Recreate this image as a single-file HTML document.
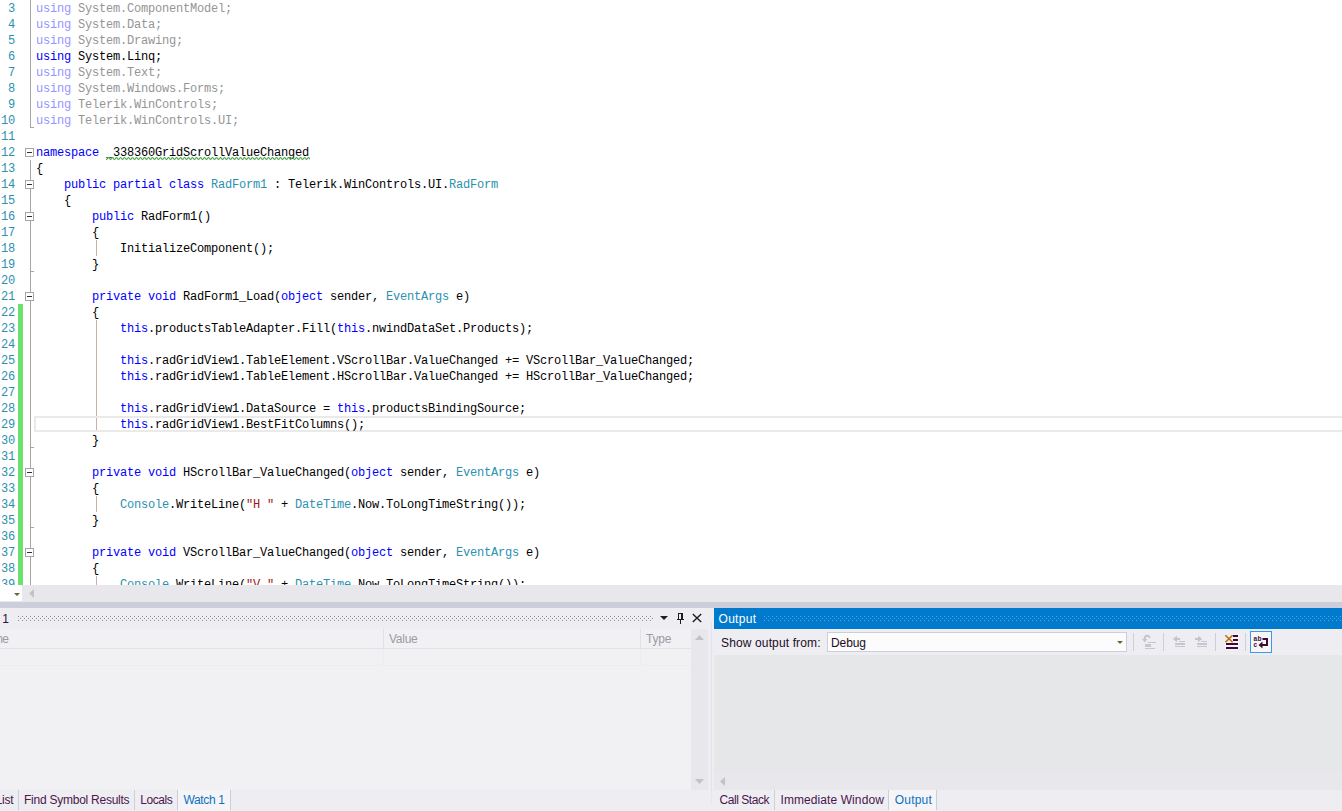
<!DOCTYPE html>
<html lang="en"><head><meta charset="utf-8"><title>RadForm1.cs - Visual Studio</title>
<style>
html,body{margin:0;padding:0}
body{width:1342px;height:811px;overflow:hidden;position:relative;background:#fff;font-family:"Liberation Sans", sans-serif;font-size:12px;color:#1e1e1e}
.abs{position:absolute}
#ed{position:absolute;left:0;top:0;width:1342px;height:585px;overflow:hidden;background:#fff}
.ln,.cl{position:absolute;height:16px;line-height:16px;font-family:"Liberation Mono", monospace;font-size:12.0px;letter-spacing:-0.2012px;white-space:pre}
.ln{left:0;width:15px;text-align:right;color:#2b91af;letter-spacing:-0.2012px}
.cl{left:36px;color:#000}
.k{color:#0000ff}.t{color:#2b91af}.s{color:#a31515}.g{color:#959595}.gk{color:#9494ff}
.ob{position:absolute;left:25px;width:7px;height:7px;border:1px solid #a5a5a5;background:#fff}
.ob i{position:absolute;left:1px;top:3px;width:5px;height:1px;background:#4d1a4d}
.ol{position:absolute;left:30px;width:1px;background:#a5a5a5}
.ot{position:absolute;left:30px;width:4px;height:1px;background:#a5a5a5}
.ig{position:absolute;left:96px;width:1px;background:#cbb0a8}
</style></head><body>
<div id="ed">
<div class="abs" style="left:18px;top:304px;width:5px;height:281px;background:#6ce26c"></div>
<div class="ol" style="top:0;height:128px"></div><div class="ot" style="top:127px"></div>
<div class="ol" style="top:160px;height:425px"></div>
<div class="ot" style="top:271px"></div><div class="ot" style="top:447px"></div><div class="ot" style="top:527px"></div>
<div class="ob" style="top:148px"><i></i></div><div class="ob" style="top:180px"><i></i></div><div class="ob" style="top:212px"><i></i></div><div class="ob" style="top:292px"><i></i></div><div class="ob" style="top:468px"><i></i></div><div class="ob" style="top:548px"><i></i></div>
<div class="ig" style="top:240px;height:16px"></div><div class="ig" style="top:320px;height:112px"></div><div class="ig" style="top:496px;height:16px"></div><div class="ig" style="top:576px;height:16px"></div>
<div class="abs" style="left:34px;top:416px;width:1320px;height:12px;border:2px solid #eaeaea"></div>
<div class="ln" style="top:1px">3</div><div class="cl" style="top:1px"><span class="gk">using</span><span class="g"> System.ComponentModel;</span></div>
<div class="ln" style="top:17px">4</div><div class="cl" style="top:17px"><span class="gk">using</span><span class="g"> System.Data;</span></div>
<div class="ln" style="top:33px">5</div><div class="cl" style="top:33px"><span class="gk">using</span><span class="g"> System.Drawing;</span></div>
<div class="ln" style="top:49px">6</div><div class="cl" style="top:49px"><span class="k">using</span> System.Linq;</div>
<div class="ln" style="top:65px">7</div><div class="cl" style="top:65px"><span class="gk">using</span><span class="g"> System.Text;</span></div>
<div class="ln" style="top:81px">8</div><div class="cl" style="top:81px"><span class="gk">using</span><span class="g"> System.Windows.Forms;</span></div>
<div class="ln" style="top:97px">9</div><div class="cl" style="top:97px"><span class="gk">using</span><span class="g"> Telerik.WinControls;</span></div>
<div class="ln" style="top:113px">10</div><div class="cl" style="top:113px"><span class="gk">using</span><span class="g"> Telerik.WinControls.UI;</span></div>
<div class="ln" style="top:129px">11</div>
<div class="ln" style="top:145px">12</div><div class="cl" style="top:145px"><span class="k">namespace</span> <span class="sq">_338360GridScrollValueChanged</span></div>
<div class="ln" style="top:161px">13</div><div class="cl" style="top:161px">{</div>
<div class="ln" style="top:177px">14</div><div class="cl" style="top:177px">    <span class="k">public partial class</span> <span class="t">RadForm1</span> : Telerik.WinControls.UI.<span class="t">RadForm</span></div>
<div class="ln" style="top:193px">15</div><div class="cl" style="top:193px">    {</div>
<div class="ln" style="top:209px">16</div><div class="cl" style="top:209px">        <span class="k">public</span> RadForm1()</div>
<div class="ln" style="top:225px">17</div><div class="cl" style="top:225px">        {</div>
<div class="ln" style="top:241px">18</div><div class="cl" style="top:241px">            InitializeComponent();</div>
<div class="ln" style="top:257px">19</div><div class="cl" style="top:257px">        }</div>
<div class="ln" style="top:273px">20</div>
<div class="ln" style="top:289px">21</div><div class="cl" style="top:289px">        <span class="k">private void</span> RadForm1_Load(<span class="k">object</span> sender, <span class="t">EventArgs</span> e)</div>
<div class="ln" style="top:305px">22</div><div class="cl" style="top:305px">        {</div>
<div class="ln" style="top:321px">23</div><div class="cl" style="top:321px">            <span class="k">this</span>.productsTableAdapter.Fill(<span class="k">this</span>.nwindDataSet.Products);</div>
<div class="ln" style="top:337px">24</div>
<div class="ln" style="top:353px">25</div><div class="cl" style="top:353px">            <span class="k">this</span>.radGridView1.TableElement.VScrollBar.ValueChanged += VScrollBar_ValueChanged;</div>
<div class="ln" style="top:369px">26</div><div class="cl" style="top:369px">            <span class="k">this</span>.radGridView1.TableElement.HScrollBar.ValueChanged += HScrollBar_ValueChanged;</div>
<div class="ln" style="top:385px">27</div>
<div class="ln" style="top:401px">28</div><div class="cl" style="top:401px">            <span class="k">this</span>.radGridView1.DataSource = <span class="k">this</span>.productsBindingSource;</div>
<div class="ln" style="top:417px">29</div><div class="cl" style="top:417px">            <span class="k">this</span>.radGridView1.BestFitColumns();</div>
<div class="ln" style="top:433px">30</div><div class="cl" style="top:433px">        }</div>
<div class="ln" style="top:449px">31</div>
<div class="ln" style="top:465px">32</div><div class="cl" style="top:465px">        <span class="k">private void</span> HScrollBar_ValueChanged(<span class="k">object</span> sender, <span class="t">EventArgs</span> e)</div>
<div class="ln" style="top:481px">33</div><div class="cl" style="top:481px">        {</div>
<div class="ln" style="top:497px">34</div><div class="cl" style="top:497px">            <span class="t">Console</span>.WriteLine(<span class="s">"H "</span> + <span class="t">DateTime</span>.Now.ToLongTimeString());</div>
<div class="ln" style="top:513px">35</div><div class="cl" style="top:513px">        }</div>
<div class="ln" style="top:529px">36</div>
<div class="ln" style="top:545px">37</div><div class="cl" style="top:545px">        <span class="k">private void</span> VScrollBar_ValueChanged(<span class="k">object</span> sender, <span class="t">EventArgs</span> e)</div>
<div class="ln" style="top:561px">38</div><div class="cl" style="top:561px">        {</div>
<div class="ln" style="top:577px">39</div><div class="cl" style="top:577px">            <span class="t">Console</span>.WriteLine(<span class="s">"V "</span> + <span class="t">DateTime</span>.Now.ToLongTimeString());</div>
<svg class="abs" style="left:106px;top:157px" width="204" height="3"><defs><pattern id="sq" width="4" height="3" patternUnits="userSpaceOnUse"><g fill="#58ab58"><rect x="2" y="0" width="1" height="1"/><rect x="1" y="1" width="1" height="1"/><rect x="3" y="1" width="1" height="1"/><rect x="0" y="2" width="1" height="1"/></g><g fill="#58ab58" opacity="0.42"><rect x="1" y="0" width="1" height="1"/><rect x="3" y="0" width="1" height="1"/><rect x="0" y="1" width="1" height="1"/><rect x="2" y="1" width="1" height="1"/><rect x="1" y="2" width="1" height="1"/><rect x="3" y="2" width="1" height="1"/></g></pattern></defs><rect width="204" height="3" fill="url(#sq)"/></svg>
</div>
<style>.tx{position:absolute;white-space:pre}</style>
<div class="abs" style="left:0px;top:585px;width:1342px;height:17px;background:#e8e8ec;"></div><div class="abs" style="left:0px;top:585px;width:22px;height:16px;background:#ffffff;"></div><svg class="abs" style="left:14px;top:593px" width="6" height="3"><path d="M0 0H6L3 3Z" fill="#6b6434"/></svg><svg class="abs" style="left:29px;top:589px" width="5" height="9"><path d="M5 0V9L0 4.5Z" fill="#c2c3c9"/></svg>
<div class="abs" style="left:0px;top:602px;width:1342px;height:6px;background:#cccedb;"></div><div class="abs" style="left:0px;top:608px;width:1342px;height:203px;background:#eeeef2;"></div>
<!-- Watch 1 tool window -->
<div class="tx" style="left:-32.5px;top:611px;line-height:16px;font-size:12px;letter-spacing:-0.345px;color:#2a1040;">Watch 1</div><svg class="abs" style="left:18px;top:616px" width="636" height="5"><defs><pattern id="gp" width="4" height="4" patternUnits="userSpaceOnUse"><rect x="0" y="0" width="1" height="1" fill="#8a8a8a"/><rect x="2" y="2" width="1" height="1" fill="#8a8a8a"/></pattern></defs><rect width="636" height="5" fill="url(#gp)"/></svg><svg class="abs" style="left:660px;top:616px" width="8" height="4"><path d="M0 0H8L4 4Z" fill="#1e1e1e"/></svg><svg class="abs" style="left:676px;top:612px" width="10" height="13" viewBox="0 0 10 13"><g fill="#1e1e1e"><rect x="2" y="1" width="1" height="6"/><rect x="2" y="1" width="5" height="1"/><rect x="5" y="1" width="2" height="6"/><rect x="1" y="7" width="7" height="1"/><rect x="4" y="8" width="1" height="4"/></g></svg><svg class="abs" style="left:692px;top:613px" width="10" height="10" viewBox="0 0 10 10"><path d="M0.8 1L9.2 9M9.2 1L0.8 9" fill="none" stroke="#1e1e1e" stroke-width="1.4"/></svg>
<div class="abs" style="left:0px;top:629px;width:691px;height:161px;background:#f1f1f4;"></div><div class="abs" style="left:0px;top:648px;width:691px;height:1px;background:#e0e1ea;"></div><div class="abs" style="left:0px;top:665px;width:691px;height:1px;background:#ededf1;"></div><div class="abs" style="left:383px;top:629px;width:1px;height:19px;background:#e0e1ea;"></div><div class="abs" style="left:383px;top:649px;width:1px;height:16px;background:#ececf0;"></div><div class="abs" style="left:640px;top:629px;width:1px;height:19px;background:#e0e1ea;"></div><div class="abs" style="left:640px;top:649px;width:1px;height:16px;background:#ececf0;"></div><div class="tx" style="left:-21px;top:631px;line-height:16px;font-size:12px;letter-spacing:-0.669px;color:#9b9ba2;">Name</div><div class="tx" style="left:389px;top:631px;line-height:16px;font-size:12px;letter-spacing:-0.275px;color:#9b9ba2;">Value</div><div class="tx" style="left:646px;top:631px;line-height:16px;font-size:12px;letter-spacing:-0.171px;color:#9b9ba2;">Type</div><div class="abs" style="left:691px;top:629px;width:17px;height:161px;background:#e8e8ec;"></div><svg class="abs" style="left:695px;top:635px" width="9" height="5"><path d="M0 5H9L4.5 0Z" fill="#c2c3c9"/></svg><svg class="abs" style="left:695px;top:779px" width="9" height="5"><path d="M0 0H9L4.5 5Z" fill="#c2c3c9"/></svg>
<div class="abs" style="left:710.5px;top:622px;width:1.5px;height:168px;background:#e1e2eb;"></div><div class="abs" style="left:710.5px;top:790px;width:1.5px;height:15px;background:#e6e6ee;"></div><div class="abs" style="left:178px;top:790px;width:52px;height:21px;background:#f5f5f8;"></div><div class="abs" style="left:18px;top:790px;width:1px;height:20px;background:#cccedb;"></div><div class="abs" style="left:134px;top:790px;width:1px;height:20px;background:#cccedb;"></div><div class="abs" style="left:177px;top:790px;width:1px;height:20px;background:#cccedb;"></div><div class="abs" style="left:230px;top:790px;width:1px;height:20px;background:#cccedb;"></div><div class="tx" style="left:-33px;top:792px;line-height:16px;font-size:12px;letter-spacing:-0.241px;color:#4a164c;">Error List</div><div class="tx" style="left:24px;top:792px;line-height:16px;font-size:12px;letter-spacing:-0.246px;color:#4a164c;">Find Symbol Results</div><div class="tx" style="left:140.2px;top:792px;line-height:16px;font-size:12px;letter-spacing:-0.417px;color:#4a164c;">Locals</div><div class="tx" style="left:183.4px;top:792px;line-height:16px;font-size:12px;letter-spacing:-0.328px;color:#0e70c0;">Watch 1</div>
<!-- Output tool window -->
<div class="abs" style="left:714px;top:608px;width:628px;height:21px;background:#007acc;"></div><div class="tx" style="left:718.5px;top:611px;line-height:16px;font-size:12px;letter-spacing:0.296px;color:#ffffff;">Output</div><svg class="abs" style="left:764px;top:616px" width="578" height="5"><defs><pattern id="gq" width="4" height="4" patternUnits="userSpaceOnUse"><rect x="0" y="0" width="1" height="1" fill="#59a8de"/><rect x="2" y="2" width="1" height="1" fill="#59a8de"/></pattern></defs><rect width="578" height="5" fill="url(#gq)"/></svg>
<div class="tx" style="left:721px;top:635px;line-height:16px;font-size:12px;letter-spacing:0.133px;color:#1c0c26;">Show output from:</div><div class="abs" style="left:827px;top:632px;width:298px;height:18px;background:#fcfcfc;border:1px solid #cccedb"></div><div class="tx" style="left:831px;top:635px;line-height:16px;font-size:12px;letter-spacing:-0.090px;color:#1c0c26;">Debug</div><svg class="abs" style="left:1117px;top:641px" width="6" height="3"><path d="M0 0H6L3 3Z" fill="#6b6434"/></svg><div class="abs" style="left:1133px;top:633px;width:1px;height:18px;background:#cccedb;"></div><div class="abs" style="left:1163px;top:633px;width:1px;height:18px;background:#cccedb;"></div><div class="abs" style="left:1215px;top:633px;width:1px;height:18px;background:#cccedb;"></div><div class="abs" style="left:1245px;top:633px;width:1px;height:18px;background:#cccedb;"></div>
<!-- toolbar icons -->
<svg class="abs" style="left:1140px;top:632px" width="20" height="20" viewBox="0 0 20 20"><path d="M9.8 5.9A2.7 2.7 0 0 0 4.7 5.3V8" fill="none" stroke="#c4c4cf" stroke-width="1.9"/><path d="M2 7H7.4L4.7 10.6Z" fill="#c4c4cf"/><rect x="8" y="10" width="8" height="1" fill="#c6c6d0"/><rect x="5" y="12" width="6" height="3" fill="#c6c6d0"/><rect x="5" y="16" width="10" height="1" fill="#c6c6d0"/></svg>
<svg class="abs" style="left:1170px;top:632px" width="20" height="20" viewBox="0 0 20 20"><path d="M2.8 7L7 3.7V6H10V8H7V10.3Z" fill="#c4c4cf"/><rect x="9" y="9" width="6" height="1" fill="#c6c6d0"/><rect x="5" y="11" width="10" height="2" fill="#c6c6d0"/><rect x="5" y="14" width="10" height="1" fill="#c6c6d0"/></svg>
<svg class="abs" style="left:1192px;top:632px" width="20" height="20" viewBox="0 0 20 20"><path d="M10.2 7L6 3.7V6H3V8H6V10.3Z" fill="#c4c4cf"/><rect x="9" y="9" width="6" height="1" fill="#c6c6d0"/><rect x="5" y="11" width="10" height="2" fill="#c6c6d0"/><rect x="5" y="14" width="10" height="1" fill="#c6c6d0"/></svg>
<svg class="abs" style="left:1222px;top:632px" width="20" height="20" viewBox="0 0 20 20"><g fill="#f5f5f8"><rect x="10" y="2" width="7" height="8"/><rect x="3" y="10" width="14" height="8"/></g><g fill="#3b0a3b"><rect x="11" y="3" width="5" height="2"/><rect x="11" y="7" width="5" height="2"/><rect x="4" y="11" width="12" height="2"/><rect x="4" y="15" width="12" height="2"/></g><path d="M3.4 3.2L10.6 10.2M10.6 3.2L3.4 10.2" stroke="#c06a00" stroke-width="1.5" fill="none"/></svg>
<div class="abs" style="left:1250px;top:631px;width:20px;height:20px;border:1px solid #3399ff;background:#f9f5f3"></div>
<svg class="abs" style="left:1251px;top:632px" width="20" height="20" viewBox="0 0 20 20"><text x="2.6" y="8.9" font-family="Liberation Sans, sans-serif" font-weight="bold" font-size="6.5" fill="#3b0a3b" letter-spacing="0.3">ab</text><text x="2.6" y="14.9" font-family="Liberation Sans, sans-serif" font-weight="bold" font-size="6.5" fill="#3b0a3b">c</text><path d="M11.5 7H16V13H10" fill="none" stroke="#3b0a3b" stroke-width="2"/><path d="M7.5 13L11.5 9.5V16.5Z" fill="#3b0a3b"/></svg>
<div class="abs" style="left:714px;top:655px;width:628px;height:135px;background:#e6e7e8;"></div><div class="abs" style="left:714px;top:773px;width:628px;height:17px;background:#e8e8ec;"></div><svg class="abs" style="left:720px;top:777px" width="5" height="9"><path d="M5 0V9L0 4.5Z" fill="#c2c3c9"/></svg>
<div class="abs" style="left:889px;top:790px;width:47px;height:21px;background:#f5f5f8;"></div><div class="abs" style="left:774px;top:790px;width:1px;height:20px;background:#cccedb;"></div><div class="abs" style="left:888px;top:790px;width:1px;height:20px;background:#cccedb;"></div><div class="abs" style="left:936px;top:790px;width:1px;height:20px;background:#cccedb;"></div><div class="tx" style="left:719.5px;top:792px;line-height:16px;font-size:12px;letter-spacing:-0.446px;color:#4a164c;">Call Stack</div><div class="tx" style="left:780.5px;top:792px;line-height:16px;font-size:12px;letter-spacing:0.085px;color:#4a164c;">Immediate Window</div><div class="tx" style="left:894.8px;top:792px;line-height:16px;font-size:12px;letter-spacing:0.196px;color:#0e70c0;">Output</div>
</body></html>
